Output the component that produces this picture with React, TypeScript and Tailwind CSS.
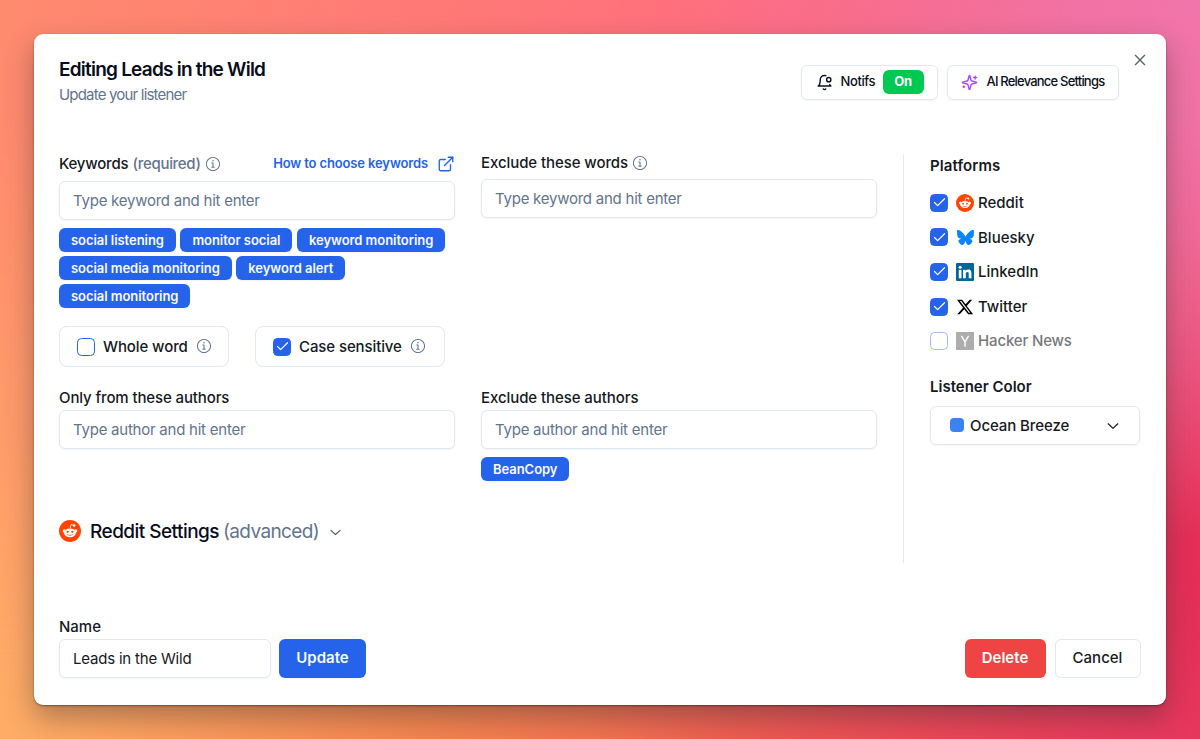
import React from 'react';
import { Check, ExternalLink } from 'lucide-react';
import { FaBluesky, FaXTwitter } from 'react-icons/fa6';
import { RxChevronDown, RxCross2, RxInfoCircled } from 'react-icons/rx';

const keywordRows = [
  ['social listening', 'monitor social', 'keyword monitoring'],
  ['social media monitoring', 'keyword alert'],
  ['social monitoring'],
];

const RedditIcon = ({ className }: { className: string }) => (
  <svg viewBox="0 0 24 24" className={className}>
    <circle cx="12" cy="12" r="12" fill="#ff4500" />
    <path d="M12.2 9 L13.1 5 L16 5.7" fill="none" stroke="#fff" strokeWidth="0.9" strokeLinejoin="round" />
    <circle cx="16.5" cy="6" r="1.3" fill="#fff" />
    <circle cx="5.8" cy="11.9" r="1.7" fill="#fff" />
    <circle cx="18.2" cy="11.9" r="1.7" fill="#fff" />
    <ellipse cx="12" cy="14" rx="6.5" ry="4.7" fill="#fff" />
    <circle cx="9.4" cy="12.9" r="1.2" fill="#ff4500" />
    <circle cx="14.6" cy="12.9" r="1.2" fill="#ff4500" />
    <path d="M9.4 16c1.5 1.1 3.7 1.1 5.2 0" fill="none" stroke="#ff4500" strokeWidth="0.8" strokeLinecap="round" />
  </svg>
);

const LinkedInIcon = () => (
  <svg viewBox="0 0 24 24" className="size-[18px]">
    <rect width="24" height="24" rx="1.5" fill="#069" />
    <g fill="#fff">
      <circle cx="5.5" cy="5.5" r="2" />
      <rect x="3.7" y="9.1" width="3.6" height="11.3" />
      <path d="M9.4 9.1h3.4v1.6c.5-.9 1.7-1.9 3.5-1.9 3.6 0 4.3 2.4 4.3 5.5v6.1H17v-5.5c0-1.3 0-3-1.8-3s-2.1 1.4-2.1 2.9v5.6H9.4z" />
    </g>
  </svg>
);

const HackerNewsIcon = () => (
  <svg viewBox="0 0 24 24" className="size-[18px]">
    <rect width="24" height="24" fill="#adadad" />
    <path d="M7.2 5 12 13.4 16.8 5M12 13v6.5" fill="none" stroke="#fff" strokeWidth="1.9" />
  </svg>
);

const BellIcon = () => (
  <svg viewBox="0 0 24 24" className="size-[17px]" fill="none" stroke="currentColor" strokeWidth="2" strokeLinecap="round" strokeLinejoin="round">
    <path d="M19.4 14.9C20.2 16.4 21 17 21 17H3s3-2 3-9c0-3.3 2.7-6 6-6 .7 0 1.3.1 1.9.3" />
    <path d="M10.3 21a1.94 1.94 0 0 0 3.4 0" />
    <circle cx="18" cy="8" r="3" />
  </svg>
);

const SparklesIcon = () => (
  <svg viewBox="0 0 24 24" className="size-[17px] text-purple-500" fill="none" stroke="currentColor" strokeWidth="2" strokeLinecap="round" strokeLinejoin="round">
    <path d="M9.937 15.5A2 2 0 0 0 8.5 14.063l-6.135-1.582a.5.5 0 0 1 0-.962L8.5 9.936A2 2 0 0 0 9.937 8.5l1.582-6.135a.5.5 0 0 1 .963 0L14.063 8.5A2 2 0 0 0 15.5 9.937l6.135 1.581a.5.5 0 0 1 0 .964L15.5 14.063a2 2 0 0 0-1.437 1.437l-1.582 6.135a.5.5 0 0 1-.963 0z" />
    <path d="M20 3v4M22 5h-4M4 17v2M5 18H3" />
  </svg>
);

const platforms = [
  { name: 'Reddit', icon: <RedditIcon className="size-[18px]" />, checked: true },
  { name: 'Bluesky', icon: <FaBluesky className="size-[17px] text-[#0a85ff]" />, checked: true },
  { name: 'LinkedIn', icon: <LinkedInIcon />, checked: true },
  { name: 'Twitter', icon: <FaXTwitter className="size-[18px] shrink-0 text-black" />, checked: true },
  { name: 'Hacker News', icon: <HackerNewsIcon />, checked: false },
];

const Checkbox = ({ checked, faded }: { checked: boolean; faded?: boolean }) => (
  <span
    className={`flex size-[18px] shrink-0 items-center justify-center rounded-[4.5px] border ${
      faded ? 'border-[#a9b8f5]' : 'border-[#2563eb]'
    } ${checked ? 'bg-[#2563eb] text-white' : 'bg-white'}`}
  >
    {checked && <Check className="size-[15px] shrink-0" strokeWidth={1.9} />}
  </span>
);

const Tag = ({ children }: { children: React.ReactNode }) => (
  <span className="flex h-6 items-center rounded-md bg-[#2563eb] px-3 pt-px text-[13px] font-semibold tracking-[-0.05px] text-slate-50 shadow-xs">
    {children}
  </span>
);

const TextInput = ({ placeholder }: { placeholder: string }) => (
  <input
    placeholder={placeholder}
    className="block h-[39px] w-full rounded-md border border-slate-200 bg-white px-[13px] text-[15px] tracking-[-0.24px] shadow-xs placeholder:text-slate-500"
  />
);

const InfoIcon = () => <RxInfoCircled className="-mt-px size-4 shrink-0 text-slate-500" />;

const App = () => {
  return (
    <div className="h-[739px] w-[1200px] overflow-hidden bg-[radial-gradient(circle_at_100%_0%,#f074aa_0%,transparent_38%),radial-gradient(ellipse_at_102%_76%,#e52c58_0%,transparent_42%),linear-gradient(90deg,#ffad66_0%,#f5844f_35%,#ee6450_62%,#e8405e_100%)] font-[Inter,sans-serif] text-[15px] text-[#151922]">
      <div className="size-full bg-[radial-gradient(circle_at_100%_0%,#f074aa_0%,transparent_38%),linear-gradient(100deg,#ff8b6e_0%,#ff6b7e_60%,#ee4a6400_100%)] [mask-image:linear-gradient(to_bottom,black_15%,transparent_95%)]" />
      <div className="relative -mt-[705.5px] ml-[33.5px] flex h-[671px] w-[1132.5px] flex-col rounded-[9px] bg-white px-[25.5px] shadow-[0_1px_2px_rgba(0,0,0,0.4),0_12px_28px_rgba(50,50,50,0.4)]">
        {/* Header */}
        <header className="flex h-[121.5px] items-start justify-between">
          <div className="pt-[22px]">
            <h2 className="text-[19px] leading-7 font-semibold tracking-[-0.77px] text-[#080c1c]">Editing Leads in the Wild</h2>
            <p className="text-[15px] leading-[22px] tracking-[-0.81px] text-slate-500">Update your listener</p>
          </div>
          <div className="flex items-start">
            <button className="mt-[31px] flex h-[35px] w-[137px] items-center rounded-md border border-slate-200 pl-3.5 text-[13px] font-medium tracking-[-0.4px] text-[#0b1020] shadow-xs">
              <BellIcon />
              <span className="ml-2">Notifs</span>
              <span className="ml-auto mr-[13px] flex h-6 w-[41px] items-center justify-center rounded-md bg-[#00c951] font-bold text-white">On</span>
            </button>
            <button className="mt-[31px] ml-[9px] flex h-[35px] w-[172px] items-center rounded-md border border-slate-200 pl-[13px] text-[13px] font-medium tracking-[-0.8px] text-[#0b1020] shadow-xs">
              <SparklesIcon />
              <span className="ml-[9px] whitespace-nowrap">AI Relevance Settings</span>
            </button>
            <button className="mt-[17px] ml-3 -mr-2">
              <RxCross2 className="size-[18px] text-[#5c6068]" />
            </button>
          </div>
        </header>

        {/* Form */}
        <div className="flex h-[408px]">
          <div className="w-[818px]">
            <div className="flex h-[171px] gap-[26px]">
              <div className="w-[396px]">
                <div className="flex h-[26px] items-center pb-2">
                  <span className="font-medium tracking-[-0.2px]">Keywords</span>
                  <span className="mr-1 ml-1 font-medium tracking-[-0.3px] text-slate-500">(required)</span>
                  <InfoIcon />
                  <a className="ml-auto flex items-center gap-[9px] text-[13px] font-semibold tracking-[-0.13px] text-[#2563eb]">
                    How to choose keywords
                    <ExternalLink className="size-[18px]" strokeWidth={1.8} />
                  </a>
                </div>
                <TextInput placeholder="Type keyword and hit enter" />
                <div className="mt-2 flex flex-col gap-1">
                  {keywordRows.map((row, index) => (
                    <div key={index} className="flex gap-[4.5px]">
                      {row.map((keyword) => (
                        <Tag key={keyword}>{keyword}</Tag>
                      ))}
                    </div>
                  ))}
                </div>
              </div>
              <div className="w-[396px]">
                <div className="flex h-6 items-center gap-1 pb-[7px] font-medium tracking-[-0.08px]">
                  Exclude these words
                  <InfoIcon />
                </div>
                <TextInput placeholder="Type keyword and hit enter" />
              </div>
            </div>

            <div className="flex h-[60px] gap-[26px] font-medium tracking-[-0.1px]">
              <label className="flex h-[41px] w-[170px] items-center rounded-lg border border-slate-200 pl-[17px]">
                <Checkbox checked={false} />
                <span className="mr-2 ml-2 pt-px">Whole word</span>
                <InfoIcon />
              </label>
              <label className="flex h-[41px] w-[190px] items-center rounded-lg border border-slate-200 pl-[17px]">
                <Checkbox checked />
                <span className="mr-2 ml-2 pt-px">Case sensitive</span>
                <InfoIcon />
              </label>
            </div>

            <div className="flex gap-[26px]">
              <div className="w-[396px]">
                <div className="h-6 leading-6 font-medium tracking-[-0.12px]">Only from these authors</div>
                <TextInput placeholder="Type author and hit enter" />
              </div>
              <div className="w-[396px]">
                <div className="h-6 leading-6 font-medium tracking-[-0.08px]">Exclude these authors</div>
                <TextInput placeholder="Type author and hit enter" />
                <div className="mt-2 flex">
                  <Tag>BeanCopy</Tag>
                </div>
              </div>
            </div>

            <button className="mt-9 flex h-7 items-center text-[19px] font-medium tracking-[-0.54px] text-[#080c1c]">
              <RedditIcon className="size-[22px]" />
              <span className="ml-[9px] pt-0.5">Reddit Settings</span>
              <span className="ml-1 pt-0.5 font-normal tracking-[-0.62px] text-slate-500">(advanced)</span>
              <RxChevronDown className="ml-2 size-[17px] text-slate-600" />
            </button>
          </div>

          <aside className="ml-[26px] w-[237px] border-l border-slate-200 pl-[26px]">
            <h3 className="h-[22px] leading-[22px] font-semibold tracking-[0.1px]">Platforms</h3>
            <ul className="mt-[8.5px]">
              {platforms.map((platform) => (
                <li key={platform.name} className="flex h-[34.6px] items-center font-medium">
                  <Checkbox checked={platform.checked} faded={!platform.checked} />
                  <span className="ml-2 flex w-[18px] justify-center">{platform.icon}</span>
                  <span className={platform.checked ? 'ml-1 pt-px' : 'ml-1 pt-px tracking-[-0.15px] text-[#77797d]'}>{platform.name}</span>
                </li>
              ))}
            </ul>
            <h3 className="mt-[17.5px] h-[22px] leading-[22px] font-semibold">Listener Color</h3>
            <button className="mt-2 flex h-[39px] w-[210px] items-center rounded-md border border-slate-200 pl-[19px] font-medium tracking-[-0.1px] shadow-xs">
              <span className="size-[14px] rounded bg-[#3b82f6]" />
              <span className="ml-1.5 pt-px">Ocean Breeze</span>
              <RxChevronDown className="mr-[17px] ml-auto size-[18px]" />
            </button>
          </aside>
        </div>

        {/* Footer */}
        <footer className="mt-[51.5px]">
          <div className="h-6 leading-[23px] font-medium">Name</div>
          <div className="flex font-medium">
            <input
              defaultValue="Leads in the Wild"
              className="h-[39px] w-[212px] rounded-md border border-slate-200 px-[13px] font-normal tracking-[-0.2px] shadow-xs"
            />
            <button className="ml-2 h-[39px] w-[87px] rounded-md bg-[#2563eb] pt-px font-semibold text-slate-50">Update</button>
            <button className="ml-auto h-[39px] w-[81px] rounded-md bg-[#ef4444] pt-px font-semibold text-slate-50">Delete</button>
            <button className="ml-[9px] h-[39px] w-[86px] rounded-md border border-slate-200 pt-px">Cancel</button>
          </div>
        </footer>
      </div>
    </div>
  );
};

export default App;
